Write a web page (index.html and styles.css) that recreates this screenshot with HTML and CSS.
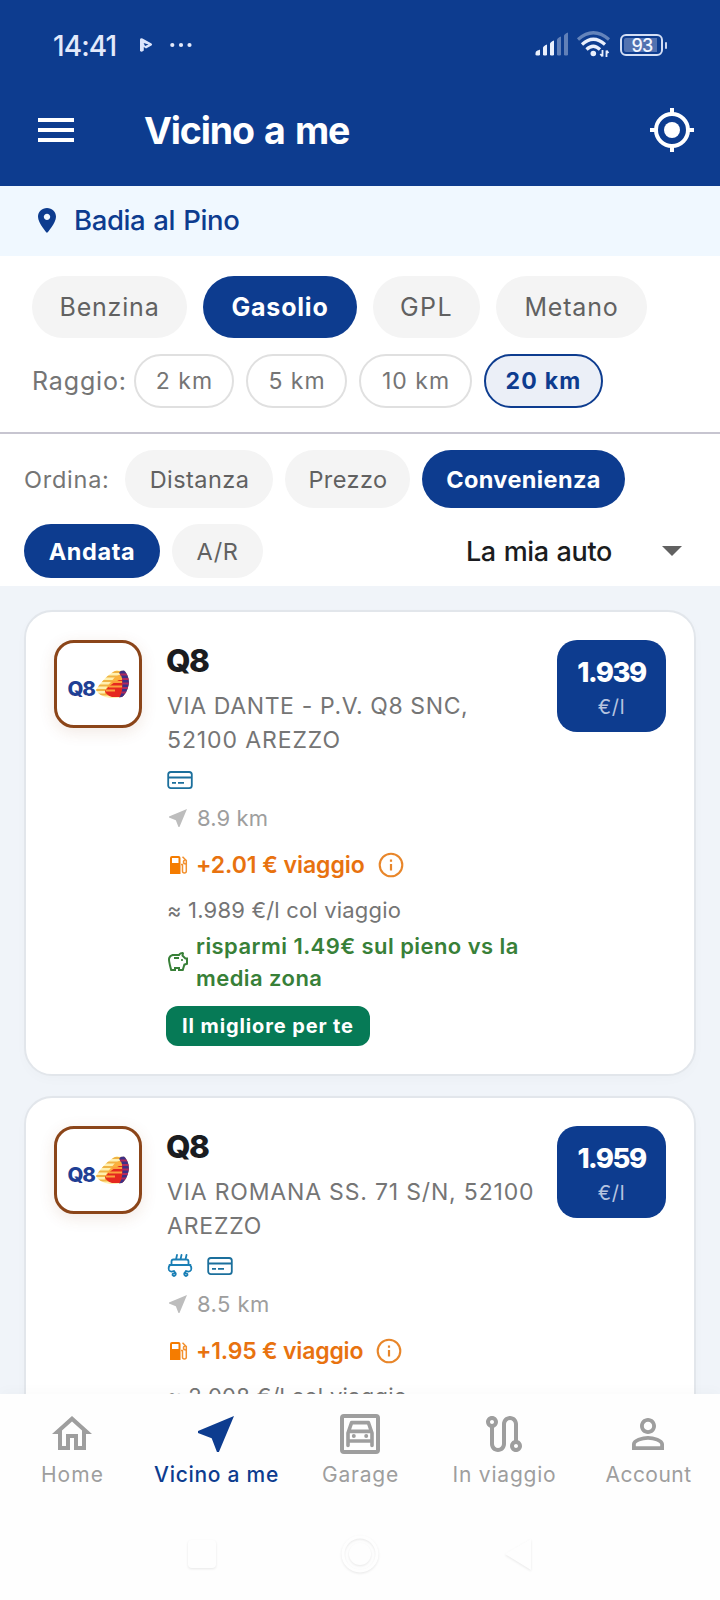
FILE: index.html
```html
<!DOCTYPE html>
<html lang="it">
<head>
<meta charset="utf-8">
<title>Vicino a me</title>
<link rel="stylesheet" href="styles.css">
</head>
<body>
<svg class="defs" width="0" height="0" aria-hidden="true">
  <defs>
    <clipPath id="sail"><path d="M0 20C4 13 13 3 21 0C23 1 24 1 28 0.500C31 3 33 8 33 13C32 20 29 25 26 27C22 28 12 29 7 26C4 25 1 22 0 20Z"/></clipPath>
    <symbol id="emblem" viewBox="0 0 33 28">
      <g clip-path="url(#sail)">
        <rect width="33" height="28" fill="#fff0b0"/>
        <path d="M0 2h33M0 6.500h33M0 11h33M0 15.500h33M0 20h33M0 24.500h33" stroke="#f0b445" stroke-width="2.200"/>
        <path d="M19 7L25 4L28 10L27 24L18 27L9 24Q8 20 14 13Z" fill="#fbb03c"/>
        <path d="M23 10H28V27H16Q10 25 9 21Q13 15 23 10Z" fill="#e5281f"/>
        <path d="M16 12h10M13 16.500h13M10 20.500h9" stroke="#fba03c" stroke-width="1.800"/>
        <path d="M25.500 0H33V28H23Q27 22 26.500 12Q26 5 23 3Z" fill="#3d2f86"/>
        <path d="M24 4.500h9M26 9h8M26 13.500h8M26 18h8M25 22.500h8" stroke="#b02a5c" stroke-width="1.900"/>
      </g>
    </symbol>
    <symbol id="near" viewBox="0 0 24 24"><path fill="currentColor" d="M21 3L3 10.530v.98l6.840 2.650L12.480 21h.98L21 3z"/></symbol>
    <symbol id="card" viewBox="0 0 26 26"><g fill="none" stroke="#1b6f9c" stroke-width="1.800"><rect x="1.200" y="5" width="23.600" height="16.200" rx="2.600"/><path d="M1 10.500h24M5 15.800h4M11 15.800h6"/></g></symbol>
    <symbol id="wash" viewBox="0 0 26 26"><g fill="none" stroke="#1a7fb5" stroke-width="1.800" stroke-linecap="round" stroke-linejoin="round"><path d="M4.500 11V8.500Q4.500 6.500 6.500 6.500H19.500Q21.500 6.500 21.500 8.500V11M2.500 12H23.500M3 12Q1 14 2 17Q3 19.500 7 18M23 12Q25 14 24 17Q23 19.500 19 18M10 2L9 6.500M14.500 2L13.500 6.500M19.500 2L18.500 6.500"/><path d="M7 18.500Q9.500 20 8.500 22Q7 24 5.500 22Q5.500 20 8 20.500M19 18.500Q16.500 20 17.500 22Q19 24 20.500 22Q20.500 20 18 20.500"/></g></symbol>
    <symbol id="pump" viewBox="0 0 24 24"><path fill="#f57c00" fill-rule="evenodd" d="M6 3h6.500q2 0 2 2v16H4V5q0-2 2-2zM6 5v5h6.500V5z"/><path fill="none" stroke="#f2902e" stroke-width="1.500" d="M15 11.500h1.500v6.800q0 1.700 1.900 1.700t1.900-1.700V7.500L16.500 3.800M20 11q-2.500 0-2.500-2t2-2"/></symbol>
    <symbol id="info" viewBox="0 0 26 26"><circle cx="13" cy="13" r="11.300" fill="none" stroke="#e8862a" stroke-width="2.100"/><path d="M13 12v6.500M13 7.500v2.200" stroke="#e8862a" stroke-width="2.200"/></symbol>
    <symbol id="pig" viewBox="0 0 24 24"><path fill="currentColor" d="M15 10c0-.55.45-1 1-1s1 .45 1 1-.45 1-1 1-1-.45-1-1zM8 9h5V7H8v2zm14-1.500v6.970l-2.820.94L17.500 21H12v-2h-2v2H4.500S2 12.540 2 9.500C2 6.460 4.460 4 7.500 4h5c.91-1.210 2.360-2 4-2 .83 0 1.500.67 1.500 1.500 0 .21-.04.4-.12.58-.14.34-.26.73-.32 1.150l2.270 2.270H22zm-2 2h-1L15.500 6c0-.65.09-1.290.26-1.910-.97.25-1.760.97-2.090 1.910H7.500C5.570 6 4 7.570 4 9.500c0 1.880 1.220 6.650 2.010 9.500H8v-2h6v2h2.010l1.550-5.150 2.440-.82V9.500z"/></symbol>
  </defs>
</svg>

<div class="app">
  <header class="top">
    <div class="status">
      <span class="clock">14:41</span>
      <svg class="play" width="14" height="16" viewBox="0 0 14 16"><path fill="#dde5fb" fill-rule="evenodd" d="M1 2.500Q1.500 .5 3.500 1.500L12.500 6.500Q13.800 7.500 12.500 8.500L7 11.500L4.800 10V13.500Q3 15.500 1 14ZM4.600 6L6 9L9.500 7.500Z"/></svg>
      <svg class="dots" width="22" height="6" viewBox="0 0 22 6" fill="#e4eafb"><circle cx="2.300" cy="3" r="2.100"/><circle cx="11" cy="3" r="2.100"/><circle cx="19.500" cy="3" r="2.100"/></svg>
      <svg class="radio" width="148" height="28" viewBox="0 0 148 28">
        <g fill="#e9effc"><path d="M.5 24v-2q0-2 2-2.500t2.500-1V24q-2 1-4.500 0zM8 24v-7q0-2 4-3.500V24q-2 1-4 0zM15 24V13q0-2 4-3.500V24q-2 1-4 0z"/><path opacity=".38" d="M22 24V9q0-2 4-3.500V24q-2 1-4 0zM29 24V5q0-2 4-3.500V24q-2 1-4 0z"/></g>
        <g fill="none" stroke="#e9effc" stroke-width="3.200"><path opacity=".4" d="M43 8.500Q58.300-5 74 8.500"/><path d="M47 13.500Q58.300 3 70 13.500M51.500 18.500Q58.300 12 65 18.500"/></g>
        <circle cx="58.300" cy="22.500" r="2.800" fill="#e9effc"/>
        <path d="M67.500 19v6.500M65.300 23l2.200 2.500M71.500 26v-6.500M73.500 22l-2-2.500" stroke="#e9effc" stroke-width="1.800" fill="none"/>
      </svg>
      <span class="battery"><b>93</b></span>
    </div>
    <div class="bar">
      <svg class="menu" width="36" height="24" viewBox="0 0 36 24"><path d="M0 2h36M0 12h36M0 22h36" stroke="#fff" stroke-width="4"/></svg>
      <h1>Vicino a me</h1>
      <svg class="gps" width="48" height="48" viewBox="0 0 24 24"><circle cx="12" cy="12" r="4" fill="#fff"/><circle cx="12" cy="12" r="8" fill="none" stroke="#fff" stroke-width="2"/><path d="M12 1v3M12 20v3M1 12h3M20 12h3" stroke="#fff" stroke-width="2"/></svg>
    </div>
  </header>

  <div class="place">
    <svg width="18" height="25" viewBox="5 2 14 20" preserveAspectRatio="none"><path fill="#0d3c8f" d="M12 2C8.130 2 5 5.130 5 9c0 5.250 7 13 7 13s7-7.750 7-13c0-3.870-3.130-7-7-7zm0 9.500c-1.380 0-2.500-1.120-2.500-2.500s1.120-2.500 2.500-2.500 2.500 1.120 2.500 2.500-1.120 2.500-2.500 2.500z"/></svg>
    <span>Badia al Pino</span>
  </div>

  <section class="filters">
    <div class="row fuel">
      <span class="chip w155">Benzina</span><span class="chip on w154">Gasolio</span><span class="chip w107 wide">GPL</span><span class="chip w150">Metano</span>
    </div>
    <div class="row radius">
      <span class="label">Raggio:</span>
      <span class="chip w100">2 km</span><span class="chip w101">5 km</span><span class="chip w113">10 km</span><span class="chip sel w119">20 km</span>
    </div>
  </section>

  <section class="sorting">
    <div class="row sort">
      <span class="label">Ordina:</span>
      <span class="chip w148">Distanza</span><span class="chip w125">Prezzo</span><span class="chip on w203">Convenienza</span>
    </div>
    <div class="row trip">
      <span class="chip on w136">Andata</span><span class="chip w91">A/R</span>
      <span class="car">La mia auto</span>
      <svg class="caret" width="20" height="10" viewBox="0 0 20 10"><path d="M0 0h20L10 10z" fill="#616161"/></svg>
    </div>
  </section>

  <main class="list">
    <article class="station">
      <div class="logo"><span>Q8</span><svg width="33" height="28"><use href="#emblem"/></svg></div>
      <div class="info">
        <h2>Q8</h2>
        <p class="addr"><span>VIA DANTE - P.V. Q8 SNC,</span><br><span class="loose">52100 AREZZO</span></p>
        <div class="services"><svg width="26" height="26"><use href="#card"/></svg></div>
        <div class="dist"><svg width="24" height="24"><use href="#near"/></svg><span>8.9 km</span></div>
        <div class="cost"><svg width="24" height="24"><use href="#pump"/></svg><span>+2.01 € viaggio</span><svg class="i" width="26" height="26"><use href="#info"/></svg></div>
        <div class="net">≈ 1.989 €/l col viaggio</div>
        <div class="save"><svg width="24" height="24"><use href="#pig"/></svg><span>risparmi 1.49€ sul pieno vs la<br>media zona</span></div>
        <div class="best">Il migliore per te</div>
      </div>
      <div class="price"><strong>1.939</strong><small>€/l</small></div>
    </article>
    <article class="station">
      <div class="logo"><span>Q8</span><svg width="33" height="28"><use href="#emblem"/></svg></div>
      <div class="info">
        <h2>Q8</h2>
        <p class="addr"><span class="mid">VIA ROMANA SS. 71 S/N, 52100</span><br><span class="mid">AREZZO</span></p>
        <div class="services"><svg width="26" height="26"><use href="#wash"/></svg><svg width="26" height="26"><use href="#card"/></svg></div>
        <div class="dist"><svg width="24" height="24"><use href="#near"/></svg><span class="d2">8.5 km</span></div>
        <div class="cost c2"><svg width="24" height="24"><use href="#pump"/></svg><span>+1.95 € viaggio</span><svg class="i" width="26" height="26"><use href="#info"/></svg></div>
        <div class="net n2">≈ 2.008 €/l col viaggio</div>
      </div>
      <div class="price"><strong>1.959</strong><small>€/l</small></div>
    </article>
  </main>

  <footer class="bottom">
    <nav>
      <a class="tab home"><svg width="48" height="48" viewBox="0 0 24 24"><path fill="currentColor" d="M12 5.690l5 4.500V18h-2v-6H9v6H7v-7.810l5-4.500M12 3L2 12h3v8h6v-6h2v6h6v-8h3L12 3z"/></svg><span>Home</span></a>
      <a class="tab active"><svg width="48" height="48"><use href="#near"/></svg><span>Vicino a me</span></a>
      <a class="tab"><svg width="48" height="48" viewBox="0 0 24 24" fill="none" stroke="currentColor"><rect x="3" y="3" width="18" height="18" rx="1" stroke-width="2"/><path d="M6 17.700V11.500L7.800 6.300h8.400L18 11.500v6.200M6 15.500h12M6.500 10.700h11" stroke-width="1.800" stroke-linecap="round" stroke-linejoin="round"/><g fill="currentColor" stroke="none"><circle cx="8.900" cy="13" r="1"/><circle cx="15.100" cy="13" r="1"/></g></svg><span>Garage</span></a>
      <a class="tab"><svg width="48" height="48" viewBox="0 0 24 24"><path fill="currentColor" d="M19 15.180V7c0-2.210-1.790-4-4-4s-4 1.790-4 4v10c0 1.100-.9 2-2 2s-2-.9-2-2V8.820C8.160 8.400 9 7.300 9 6c0-1.660-1.340-3-3-3S3 4.340 3 6c0 1.300.84 2.400 2 2.820V17c0 2.210 1.790 4 4 4s4-1.790 4-4V7c0-1.100.9-2 2-2s2 .9 2 2v8.180c-1.160.41-2 1.510-2 2.820 0 1.660 1.340 3 3 3s3-1.340 3-3c0-1.300-.84-2.400-2-2.820zM6 7c-.55 0-1-.45-1-1s.45-1 1-1 1 .45 1 1-.45 1-1 1zm12 12c-.55 0-1-.45-1-1s.45-1 1-1 1 .45 1 1-.45 1-1 1z"/></svg><span>In viaggio</span></a>
      <a class="tab"><svg width="48" height="48" viewBox="0 0 24 24"><path fill="currentColor" d="M12 5.900c1.160 0 2.100.94 2.100 2.100s-.94 2.100-2.100 2.100S9.900 9.160 9.900 8s.94-2.100 2.100-2.100m0 9c2.970 0 6.100 1.460 6.100 2.100v1.100H5.900V17c0-.64 3.130-2.100 6.100-2.100M12 4C9.790 4 8 5.790 8 8s1.790 4 4 4 4-1.790 4-4-1.790-4-4-4zm0 9c-2.670 0-8 1.340-8 4v3h16v-3c0-2.660-5.330-4-8-4z"/></svg><span class="acc">Account</span></a>
    </nav>
    <div class="system">
      <svg width="48" height="48" viewBox="0 0 48 48"><rect x="10" y="9" width="28" height="28" rx="4" fill="#fefefe"/></svg>
      <svg width="48" height="48" viewBox="0 0 48 48"><circle cx="24" cy="23" r="17" fill="none" stroke="#fefefe" stroke-width="3"/><circle cx="24" cy="23" r="11" fill="#fefefe"/></svg>
      <svg width="48" height="48" viewBox="0 0 48 48"><path d="M11 23L37 8V39z" fill="#fefefe"/></svg>
    </div>
  </footer>
</div>
</body>
</html>
```
FILE: styles.css
```css
* { box-sizing: border-box; }
body { margin: 0; font-family: Inter, "Liberation Sans", sans-serif; background: #fefefe; }
h1, h2, p { margin: 0; }
svg { display: block; flex: none; }
span { white-space: nowrap; }
.defs { position: absolute; }
.app { width: 720px; height: 1600px; overflow: hidden; display: flex; flex-direction: column; }

.top { height: 186px; background: #0d3c8f; color: #fff; }
.status { height: 74px; padding: 16px 52px 0 53px; display: flex; align-items: center; }
.clock { width: 86px; padding-top: 1px; font-size: 28px; font-weight: 500; letter-spacing: -0.900px; color: #e2e9fb; }
.play { margin-right: 17px; }
.dots { margin-right: auto; }
.radio { width: 148px; margin-right: -63px; }
.battery { position: relative; width: 43px; height: 22px; margin-right: 5px; border: 2px solid #d3def5; border-radius: 6px; padding: 2px 4px 2px 2px; background: #5272b0 content-box; display: flex; align-items: center; justify-content: center; }
.battery::after { content: ""; position: absolute; right: -6px; top: 6px; width: 2.500px; height: 7px; border-radius: 1px; background: #c9d5f0; }
.battery b { font-size: 18px; font-weight: 500; line-height: 18px; letter-spacing: -0.800px; margin-left: 3px; margin-top: 1px; color: #f4f7ff; }
.bar { height: 112px; padding: 0 24px 0 38px; display: flex; align-items: center; }
.menu { margin-right: 70px; }
h1 { flex: 1; padding-top: 1px; font-size: 37.500px; font-weight: 700; line-height: 48px; letter-spacing: -1.150px; word-spacing: 2.500px; }

.place { height: 70px; padding: 0 38px 2px; display: flex; align-items: center; background: #f0f8ff; color: #0d3c8f; font-size: 27.500px; font-weight: 500; letter-spacing: -0.400px; word-spacing: 1.200px; }
.place svg { margin-right: 18px; margin-top: 1px; }

.row { display: flex; align-items: center; }
.filters { height: 178px; padding: 20px 32px 0; border-bottom: 2px solid #c7c5d0; background: #fff; display: flex; flex-direction: column; gap: 16px; }
.sorting { height: 152px; padding: 16px 24px 8px; background: #fff; display: flex; flex-direction: column; gap: 16px; }
.chip { display: flex; align-items: center; justify-content: center; height: 100%; border-radius: 31px; background: #f4f4f4; color: #616161; }
.chip.on { background: #0d3c8f; color: #fff; font-weight: 700; }
.label { color: #757575; }
.fuel { height: 62px; gap: 16px; font-size: 25px; letter-spacing: 0.800px; }
.wide { letter-spacing: 1.400px; }
.radius { height: 54px; gap: 12px; font-size: 23px; letter-spacing: 1px; }
.radius .label { width: 90px; font-size: 25px; letter-spacing: 0.850px; }
.radius .chip { background: #fff; border: 2px solid #e0e0e0; color: #757575; padding-left: 1px; }
.radius .chip.sel { background: #ebeff7; border-color: #0d3c8f; color: #0d3c8f; font-weight: 700; letter-spacing: 1.200px; padding-left: 0; }
.sort { height: 58px; gap: 12px; font-size: 23.500px; letter-spacing: 0.450px; }
.sort .label { width: 89px; letter-spacing: 0.750px; }
.sort .chip { padding-left: 1px; }
.sort .chip.on { letter-spacing: 0.380px; padding-left: 0; }
.trip { height: 54px; gap: 12px; font-size: 23.500px; letter-spacing: 0.600px; }
.car { margin-left: auto; font-size: 27px; font-weight: 500; letter-spacing: -0.350px; word-spacing: 1px; color: #1a1c20; }
.caret { margin-left: 38px; margin-right: 14px; }
.w155 { width: 155px; } .w154 { width: 154px; } .w107 { width: 107px; } .w150 { width: 151px; }
.w100 { width: 100px; } .w101 { width: 101px; } .w113 { width: 113px; } .w119 { width: 119px; }
.w148 { width: 148px; } .w125 { width: 125px; } .w203 { width: 203px; } .w136 { width: 136px; } .w91 { width: 91px; }

.list { height: 808px; overflow: hidden; padding: 24px; background: #f0f4f9; }
.station { height: 466px; margin-bottom: 20px; padding: 28px; border: 2px solid #e2e6eb; border-radius: 28px; background: #fff; box-shadow: 0 4px 12px rgba(0, 0, 0, 0.020); display: flex; align-items: flex-start; }
.logo { width: 88px; height: 88px; margin-right: 24px; border: 3px solid #8b4519; border-radius: 20px; background: #fff; box-shadow: 0 4px 16px rgba(139, 69, 25, 0.120); display: flex; align-items: center; justify-content: center; }
.logo span { margin-top: 10px; font-size: 20.500px; font-weight: 800; line-height: 20px; letter-spacing: -1.200px; color: #1f3f94; }
.logo svg { margin-left: 1px; margin-top: -1px; }
.info { flex: 1; }
h2 { height: 42px; font-size: 31.500px; font-weight: 800; line-height: 42px; letter-spacing: -1.500px; color: #1a1c20; }
.addr { margin-top: 7px; height: 68px; padding-left: 1px; font-size: 23px; line-height: 34px; letter-spacing: 0.610px; color: #757575; white-space: nowrap; }
.mid { letter-spacing: 0.820px; }
.loose { letter-spacing: 0.900px; }
.services { margin-top: 10px; height: 26px; padding-left: 1px; display: flex; gap: 14px; }
.dist { margin-top: 13px; height: 24px; display: flex; align-items: center; gap: 7px; font-size: 22px; letter-spacing: 0.100px; color: #9e9e9e; }
.dist svg { color: #bdbdbd; }
.d2 { letter-spacing: 0.450px; }
.cost { margin-top: 21px; height: 28px; display: flex; align-items: center; gap: 6px; font-size: 23px; font-weight: 600; letter-spacing: -0.060px; color: #e8720f; }
.cost .i { margin-left: 7px; }
.c2 { letter-spacing: -0.200px; }
.net { margin-top: 17px; height: 28px; padding-left: 1px; font-size: 22px; line-height: 28px; letter-spacing: 0.180px; color: #757575; white-space: nowrap; }
.n2 { letter-spacing: 0.250px; }
.save { margin-top: 6px; height: 64px; display: flex; align-items: center; gap: 6px; font-size: 22px; font-weight: 600; line-height: 32px; letter-spacing: 0.440px; color: #388038; }
.best { margin-top: 12px; width: 204px; height: 40px; border-radius: 12px; background: #067a56; color: #fff; font-size: 20px; font-weight: 700; line-height: 41px; letter-spacing: 0.880px; text-align: center; white-space: nowrap; }
.price { width: 109px; height: 92px; padding-top: 17px; border-radius: 20px; background: #0d3c8f; color: #fff; display: flex; flex-direction: column; align-items: center; }
.price strong { font-size: 27.500px; font-weight: 800; line-height: 30px; letter-spacing: -1.500px; }
.price small { margin-top: 6px; font-size: 20px; line-height: 28px; letter-spacing: 0.700px; color: #b6c4e0; }

.bottom { position: relative; height: 206px; background: #fefefe; box-shadow: 0 -4px 12px rgba(0, 0, 0, 0.020); }
nav { display: grid; grid-template-columns: repeat(5, 144px); padding-top: 16px; color: #9e9e9e; }
.tab { display: flex; flex-direction: column; align-items: center; font-size: 21px; letter-spacing: 0.780px; line-height: 30px; }
.tab span { margin-top: 2px; margin-left: 1px; }
.home { letter-spacing: 1.100px; }
.tab .acc { letter-spacing: 0.450px; }
.active { color: #0d3c8f; font-weight: 500; letter-spacing: 0.720px; }
.system { margin-top: 41px; display: grid; grid-template-columns: repeat(3, 158px); justify-content: center; justify-items: center; }
.system svg { filter: drop-shadow(0 1.500px 1.200px rgba(0, 0, 0, 0.090)); }
```
